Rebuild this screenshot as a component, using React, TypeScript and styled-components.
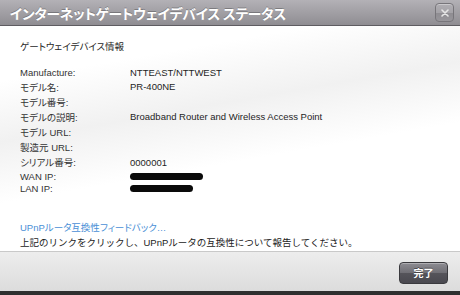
import React from "react";
import styled, { createGlobalStyle } from "styled-components";

const Global = createGlobalStyle`
  html, body { margin: 0; padding: 0; }
  body {
    width: 460px;
    height: 295px;
    overflow: hidden;
    background: #2e2e2e;
    font-family: "Liberation Sans", "Noto Sans CJK JP", sans-serif;
  }
`;

const Dialog = styled.div`
  width: 460px;
  height: 295px;
  display: flex;
  flex-direction: column;
`;

const TitleBar = styled.div`
  height: 25px;
  flex: none;
  display: flex;
  align-items: center;
  justify-content: space-between;
  padding: 0 6px 0 10px;
  background: linear-gradient(#b3b1b6, #a19fa4 50%, #8f8d92);
  border-bottom: 1px solid #5e5c61;
`;

const Title = styled.h1`
  margin: 0;
  color: #ffffff;
  font-family: "Noto Sans CJK JP", sans-serif;
  font-weight: 700;
  font-size: 13.7px;
  font-feature-settings: "palt";
  letter-spacing: -0.2px;
  text-shadow: 0 -1px 0 rgba(0, 0, 0, 0.25);
`;

const CloseButton = styled.button`
  width: 19px;
  height: 19px;
  padding: 0;
  border: 1px solid #77757a;
  border-radius: 4px;
  background: linear-gradient(#b0aeb3 0%, #a5a3a8 50%, #8e8c91 51%, #98969b 100%);
  box-shadow: inset 0 1px 0 rgba(255, 255, 255, 0.35);
  display: flex;
  align-items: center;
  justify-content: center;
`;

const Body = styled.div`
  flex: 1;
  padding: 14px 20px 0;
  background: linear-gradient(170deg, #ffffff 0%, #ffffff 18%, #f1f1f1 38%, #ffffff 58%, #ffffff 100%);
  color: #2a2a2a;
  font-size: 9.5px;
`;

const SectionTitle = styled.div`
  height: 12px;
  line-height: 12px;
  font-family: "Noto Sans CJK JP", sans-serif;
  font-feature-settings: "palt";
  color: #1e1e1e;
  margin-bottom: 12.5px;
`;

const InfoList = styled.div`
  display: flex;
  flex-direction: column;
`;

const Row = styled.div<{ $h: number }>`
  display: grid;
  grid-template-columns: 110px 1fr;
  height: ${(p) => p.$h}px;
  align-items: center;
`;

const Label = styled.span`
  font-family: "Liberation Sans", "Noto Sans CJK JP", sans-serif;
  font-feature-settings: "palt";
  color: #333333;
`;

const Value = styled.span`
  color: #1e1e1e;
`;

const Redacted = styled.span`
  display: block;
  height: 7px;
  border-radius: 3.5px;
  background: #0a0a0a;
`;

const Link = styled.a`
  display: block;
  margin-top: 26px;
  height: 14px;
  line-height: 14px;
  color: #4a8fd6;
  text-decoration: none;
  font-family: "Liberation Sans", "Noto Sans CJK JP", sans-serif;
  font-feature-settings: "palt";
`;

const Note = styled.div`
  height: 14px;
  line-height: 14px;
  margin-top: 1px;
  font-family: "Liberation Sans", "Noto Sans CJK JP", sans-serif;
  color: #222222;
`;

const Footer = styled.div`
  height: 40px;
  flex: none;
  display: flex;
  align-items: center;
  justify-content: flex-end;
  padding: 2px 12px 0 0;
  box-sizing: border-box;
  border-top: 1px solid #c9c9c9;
  background: linear-gradient(#ededed, #dcdcdc);
`;

const DoneButton = styled.button`
  width: 49px;
  height: 22px;
  border: 1px solid #3a3a3e;
  border-radius: 4px;
  background: linear-gradient(#8d8c92 0%, #6f6e74 50%, #55545a 51%, #4a4950 100%);
  box-shadow: inset 0 1px 0 rgba(255, 255, 255, 0.3);
  color: #ffffff;
  font-family: "Noto Sans CJK JP", sans-serif;
  font-weight: 700;
  font-size: 10px;
  padding: 0;
  text-shadow: 0 -1px 0 rgba(0, 0, 0, 0.4);
`;

const BottomStrip = styled.div`
  height: 4px;
  flex: none;
  background: #2f2f2f;
`;

const rows: { label: string; value?: string; redact?: number; h: number }[] = [
  { label: "Manufacture:", value: "NTTEAST/NTTWEST", h: 15 },
  { label: "モデル名:", value: "PR-400NE", h: 14.5 },
  { label: "モデル番号:", h: 15 },
  { label: "モデルの説明:", value: "Broadband Router and Wireless Access Point", h: 15 },
  { label: "モデル URL:", h: 15 },
  { label: "製造元 URL:", h: 15.5 },
  { label: "シリアル番号:", value: "0000001", h: 15 },
  { label: "WAN IP:", redact: 73, h: 13 },
  { label: "LAN IP:", redact: 63, h: 12.5 },
];

export default function App() {
  return (
    <>
      <Global />
      <Dialog>
        <TitleBar>
          <Title>インターネットゲートウェイデバイス ステータス</Title>
          <CloseButton aria-label="close">
            <svg width="8" height="8" viewBox="0 0 8 8">
              <path d="M1 1 L7 7 M7 1 L1 7" stroke="#e6e6e6" strokeWidth="1.6" strokeLinecap="round" />
            </svg>
          </CloseButton>
        </TitleBar>
        <Body>
          <SectionTitle>ゲートウェイデバイス情報</SectionTitle>
          <InfoList>
            {rows.map((r) => (
              <Row key={r.label} $h={r.h}>
                <Label>{r.label}</Label>
                {r.redact ? (
                  <Redacted style={{ width: r.redact }} />
                ) : (
                  <Value>{r.value ?? ""}</Value>
                )}
              </Row>
            ))}
          </InfoList>
          <Link href="#">UPnPルータ互換性フィードバック…</Link>
          <Note>上記のリンクをクリックし、UPnPルータの互換性について報告してください。</Note>
        </Body>
        <Footer>
          <DoneButton>完了</DoneButton>
        </Footer>
        <BottomStrip />
      </Dialog>
    </>
  );
}
